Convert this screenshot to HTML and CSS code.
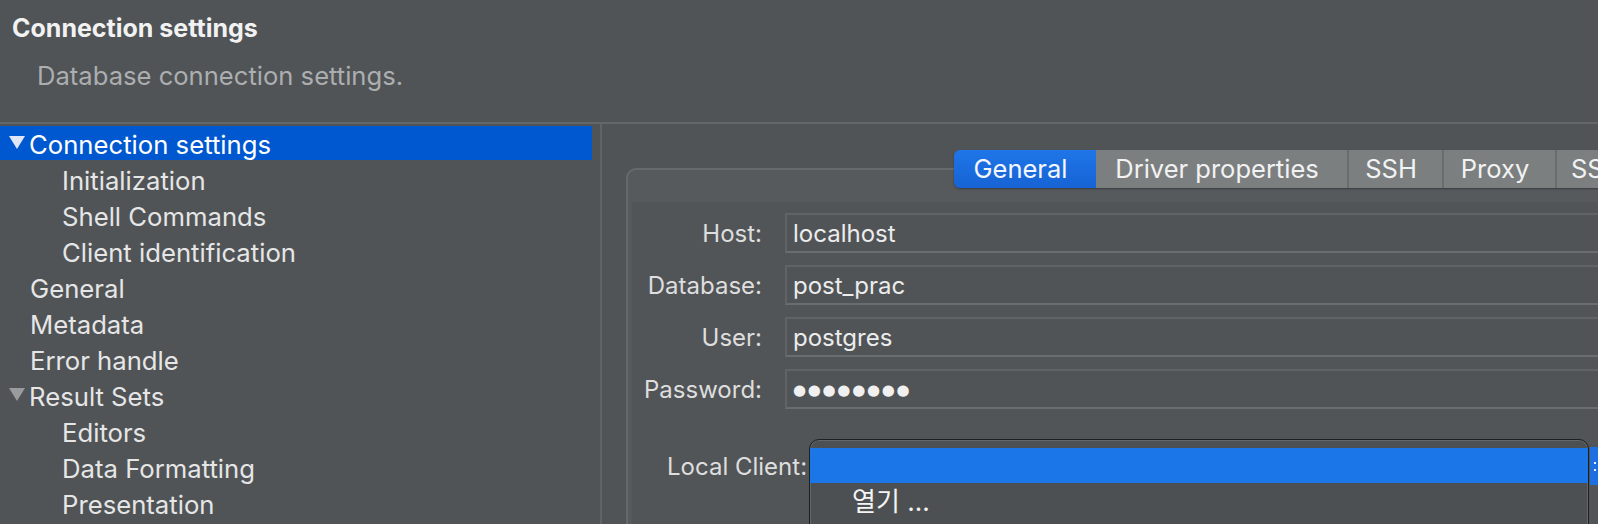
FILE: index.html
```html
<!DOCTYPE html>
<html>
<head>
<meta charset="utf-8">
<link rel="stylesheet" href="styles.css">
</head>
<body>
<div class="page">
  <header class="header">
    <div class="title">Connection settings</div>
    <div class="subtitle">Database connection settings.</div>
  </header>
  <div class="sep"></div>
  <div class="main">
    <nav class="sidebar">
      <div class="row lvl1 selected"><span class="tri tri-sel"></span>Connection settings</div>
      <div class="row lvl2">Initialization</div>
      <div class="row lvl2">Shell Commands</div>
      <div class="row lvl2">Client identification</div>
      <div class="row lvl1">General</div>
      <div class="row lvl1">Metadata</div>
      <div class="row lvl1">Error handle</div>
      <div class="row lvl1"><span class="tri"></span>Result Sets</div>
      <div class="row lvl2">Editors</div>
      <div class="row lvl2">Data Formatting</div>
      <div class="row lvl2">Presentation</div>
    </nav>
    <div class="divider"></div>
    <section class="content">
      <div class="box">
        <div class="tabs">
          <div class="tab active t-general">General</div>
          <div class="tab t-driver">Driver properties</div>
          <div class="tab t-ssh">SSH</div>
          <div class="tab t-proxy">Proxy</div>
          <div class="tab t-ssl">SSL</div>
        </div>
        <div class="panel">
          <div class="form">
            <label class="lbl">Host:</label>
            <div class="field">localhost</div>
            <label class="lbl">Database:</label>
            <div class="field">post_prac</div>
            <label class="lbl">User:</label>
            <div class="field">postgres</div>
            <label class="lbl">Password:</label>
            <div class="field pw">●●●●●●●●</div>
          </div>
          <div class="client-row">
            <span class="client-lbl">Local Client:</span>
            <div class="combo">
              <div class="popup">
                <div class="popup-item hl"></div>
                <div class="popup-item open">열기 ...</div>
              </div>
            </div>
            <div class="combo-btn"><span class="dot"></span><span class="dot"></span></div>
          </div>
        </div>
      </div>
    </section>
  </div>
</div>
</body>
</html>
```
FILE: styles.css
```css
html, body {
  margin: 0;
  padding: 0;
}
body {
  background: #505457;
  font-family: Inter, "Noto Sans", sans-serif;
  color: #e4e4e4;
  overflow: hidden;
}
.page {
  width: 1598px;
  height: 524px;
  overflow: hidden;
  display: flex;
  flex-direction: column;
}
.header {
  height: 122px;
  box-sizing: border-box;
  padding: 13px 0 0 12px;
  flex: none;
}
.title {
  font-weight: 700;
  font-size: 25px;
  line-height: 30px;
  color: #f2f2f2;
}
.subtitle {
  margin: 18px 0 0 25px;
  font-size: 25.6px;
  line-height: 30px;
  color: #acaeb0;
}
.sep {
  height: 2px;
  background: #63676a;
  flex: none;
}
.main {
  display: flex;
  flex: 1;
  min-height: 0;
}
.sidebar {
  width: 592px;
  margin-right: 8px;
  padding-top: 2px;
  flex: none;
}
.row {
  height: 34px;
  margin-bottom: 2px;
  padding-top: 2px;
  box-sizing: border-box;
  display: flex;
  align-items: center;
  font-size: 25.7px;
  color: #e6e6e6;
  white-space: nowrap;
}
.row.lvl1 { padding-left: 30px; }
.row.lvl2 { padding-left: 62px; }
.row .tri {
  width: 0;
  height: 0;
  border-left: 8.5px solid transparent;
  border-right: 8.5px solid transparent;
  border-top: 13px solid #9a9b9c;
  margin-left: -21px;
  margin-right: 4px;
  margin-top: -3px;
}
.row .tri-sel { border-top-color: #dfe7f7; }
.row.selected {
  background: #0058d0;
  color: #ffffff;
}
.divider {
  width: 2px;
  background: #606467;
  flex: none;
}
.content {
  flex: 1;
  min-width: 0;
  padding: 44px 0 0 24px;
}
.box {
  margin-right: -120px;
  height: 420px;
  border: 2px solid #66696c;
  border-radius: 10px;
  background: #575a5d;
}
.tabs {
  display: flex;
  height: 38px;
  margin: -20px 0 0 326px;
  box-shadow: 0 1px 2px rgba(0,0,0,0.35);
  border-radius: 6px 0 0 6px;
  width: max-content;
}
.tab {
  display: flex;
  align-items: center;
  justify-content: center;
  font-size: 25.5px;
  color: #f2f2f2;
  background: #7c7f80;
  border-left: 2px solid #6a6d6e;
  box-sizing: border-box;
  padding-bottom: 1px;
  padding-right: 9px;
}
.tab.active {
  background: linear-gradient(#1f76e8, #1663d4);
  border-left: none;
  border-radius: 6px 0 0 6px;
  color: #f4f7ff;
}
.t-general { width: 142px; }
.t-driver { width: 251px; border-left: none; }
.t-ssh { width: 95px; }
.t-proxy { width: 113px; }
.t-ssl { width: 110px; justify-content: flex-start; padding-left: 14px; }
.panel {
  margin: 14px 0 0 4px;
  height: 360px;
  background: #525558;
  padding-top: 11px;
  box-sizing: border-box;
}
.form {
  display: grid;
  grid-template-columns: 130px 1fr;
  column-gap: 23px;
  row-gap: 12px;
}
.lbl {
  text-align: right;
  align-self: center;
  font-size: 24px;
  color: #dedede;
  white-space: nowrap;
}
.field {
  height: 40px;
  box-sizing: border-box;
  border: 2px solid #616467;
  border-bottom-color: #6a6d70;
  background: #515457;
  padding-left: 6px;
  padding-top: 1px;
  display: flex;
  align-items: center;
  font-size: 24px;
  color: #ececec;
}
.field.pw {
  font-family: "DejaVu Sans", sans-serif;
  font-size: 15px;
  letter-spacing: 1.7px;
  color: #f0f0f0;
}
.client-row {
  display: flex;
  align-items: center;
  margin-top: 39px;
  padding-left: 35px;
  height: 36px;
}
.client-lbl {
  font-size: 24px;
  color: #dedede;
  white-space: nowrap;
  width: 140px;
  flex: none;
}
.combo {
  position: relative;
  margin-left: 3px;
  width: 779px;
  height: 38px;
  flex: none;
  background: #1d6fe0;
  border-radius: 6px 0 0 6px;
}
.combo-btn {
  width: 24px;
  height: 38px;
  flex: none;
  background: #1e6fe2;
  border-radius: 0 6px 6px 0;
  margin-left: 1px;
  display: flex;
  flex-direction: column;
  align-items: flex-start;
  justify-content: center;
  gap: 5px;
  padding-left: 4px;
  box-sizing: border-box;
}
.dot {
  width: 2px;
  height: 2px;
  background: #e8eefc;
}
.popup {
  position: absolute;
  left: -1px;
  top: -8px;
  width: 780px;
  height: 130px;
  box-sizing: border-box;
  border: 1px solid #1e1f20;
  border-radius: 10px;
  box-shadow: inset 0 0 0 1px #65686b;
  background: #4d5053;
  padding-top: 8px;
  overflow: hidden;
}
.popup-item {
  height: 35px;
  display: flex;
  align-items: center;
  padding-left: 42px;
  font-family: Inter, "Noto Sans CJK KR", sans-serif;
  font-size: 26px;
  color: #f4f4f4;
  box-sizing: border-box;
}
.popup-item.open {
  height: 40px;
  padding-bottom: 8px;
}
.popup-item.hl {
  background: #1b77e7;
}
```
